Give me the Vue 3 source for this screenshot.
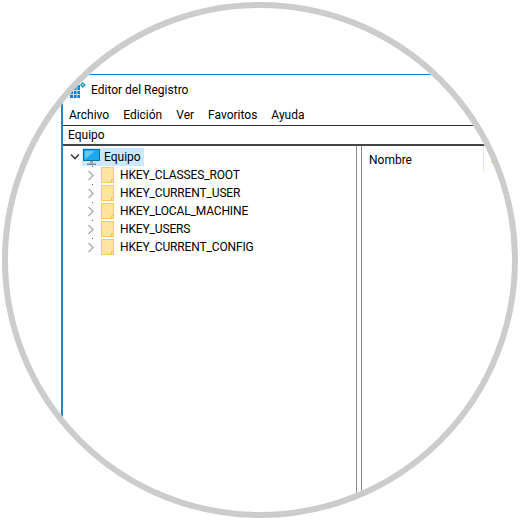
<script setup>
const menus = ['Archivo', 'Edición', 'Ver', 'Favoritos', 'Ayuda']
const keys = [
  'HKEY_CLASSES_ROOT',
  'HKEY_CURRENT_USER',
  'HKEY_LOCAL_MACHINE',
  'HKEY_USERS',
  'HKEY_CURRENT_CONFIG'
]
</script>

<template>
  <div class="ring">
    <div class="window">
      <div class="titlebar">
        <svg class="app-icon" width="16" height="16" viewBox="0 0 16 16">
          <path d="M0 16V8L6 3H10V16Z" fill="#0a84d8" />
          <path d="M0 8.5H10M0 12.5H10M3.5 6V16M7 3V16" stroke="#bfe3fa" stroke-width="1" fill="none" />
          <path d="M12.5 0L16 3L12.5 6L10 3Z" fill="#1d96dc" />
          <rect x="12" y="2.2" width="1.6" height="1.6" fill="#a8dcf7" />
        </svg>
        <span>Editor del Registro</span>
      </div>
      <div class="menubar">
        <span v-for="m in menus" :key="m">{{ m }}</span>
      </div>
      <div class="address">Equipo</div>
      <div class="panes">
        <div class="tree">
          <div class="root">
            <svg class="chevron" width="10" height="8" viewBox="0 0 10 8">
              <path d="M1 1.5L5 5.5L9 1.5" stroke="#404040" stroke-width="1.6" fill="none" />
            </svg>
            <div class="root-label">
              <svg width="17" height="16" viewBox="0 0 17 16">
                <rect x="0.5" y="0.5" width="16" height="11" fill="#19a9ec" stroke="#0d6fa8" />
                <path d="M2 10L12 2H2Z" fill="#63c9f5" />
                <rect x="7" y="12" width="3" height="2.5" fill="#9aa4ab" />
                <rect x="4" y="14.5" width="9" height="1.5" fill="#7e8a92" />
              </svg>
              <span>Equipo</span>
            </div>
          </div>
          <div v-for="k in keys" :key="k" class="key">
            <svg class="expand" width="8" height="11" viewBox="0 0 8 11">
              <path d="M0.5 1L5 5.5L0.5 10" stroke="#b0b0b0" stroke-width="1.5" fill="none" />
            </svg>
            <svg class="folder" width="13" height="16" viewBox="0 0 13 16">
              <rect x="0.5" y="0.5" width="12" height="15" fill="#ffe49b" stroke="#f5cb5f" />
              <path d="M10.5 15.5V12.5H12.5" stroke="#f0c452" fill="none" />
            </svg>
            <span class="key-name">{{ k }}</span>
          </div>
        </div>
        <div class="list">
          <div class="list-head">
            <span class="col-name">Nombre</span>
            <span class="col-type">Tipo</span>
          </div>
        </div>
      </div>
    </div>
  </div>
</template>

<style>
body {
  background: #fff;
}
</style>

<style scoped>
.ring {
  box-sizing: border-box;
  width: 516px;
  height: 516px;
  margin: 2px;
  padding: 66px 0 0 53px;
  border: 6px solid #ccc;
  border-radius: 50%;
  overflow: hidden;
  background: #fff;
  font-family: Roboto, "Noto Sans", sans-serif;
  font-size: 12px;
  color: #000;
}

.window {
  box-sizing: border-box;
  width: 560px;
  height: 460px;
  border-top: 1px solid #0a84d8;
  border-left: 2px solid #3a80b5;
  display: flex;
  flex-direction: column;
}

.titlebar {
  height: 29px;
  display: flex;
  align-items: center;
  gap: 5px;
  padding-left: 7px;
}

.menubar {
  height: 21px;
  display: flex;
  align-items: center;
  gap: 14px;
  padding-left: 6px;
}

.address {
  box-sizing: border-box;
  height: 21px;
  padding-left: 5px;
  line-height: 19px;
  border-top: 1px solid #333;
  border-bottom: 2px solid #444;
}

.panes {
  flex: 1;
  display: flex;
}

.tree {
  box-sizing: border-box;
  width: 294px;
  padding: 2px 0 0 7px;
  border-right: 1px solid #858a94;
}

.root {
  height: 18px;
  display: flex;
  align-items: center;
}

.chevron {
  margin-right: 2px;
}

.root-label {
  height: 18px;
  padding: 0 3px 0 1px;
  display: flex;
  align-items: center;
  gap: 4px;
  background: #cce8ff;
}

.key {
  position: relative;
  height: 18px;
  display: flex;
  align-items: center;
  margin-left: 18px;
}

.key::before {
  content: "";
  position: absolute;
  left: 4px;
  top: 0;
  width: 1px;
  height: 1px;
  background: #555;
}

.key-name {
  margin-bottom: 1px;
  letter-spacing: -0.15px;
}

.expand {
  margin-right: 5px;
}

.folder {
  margin-right: 6px;
}

.list {
  flex: 1;
  margin-left: 4px;
  border-left: 1px solid #858a94;
}

.list-head {
  height: 26px;
  display: flex;
  align-items: center;
}

.col-name {
  box-sizing: border-box;
  width: 122px;
  height: 26px;
  line-height: 28px;
  padding-left: 7px;
  border-right: 1px solid #e5e5e5;
}

.col-type {
  padding-left: 5px;
  color: #4a0a0a;
}
</style>
